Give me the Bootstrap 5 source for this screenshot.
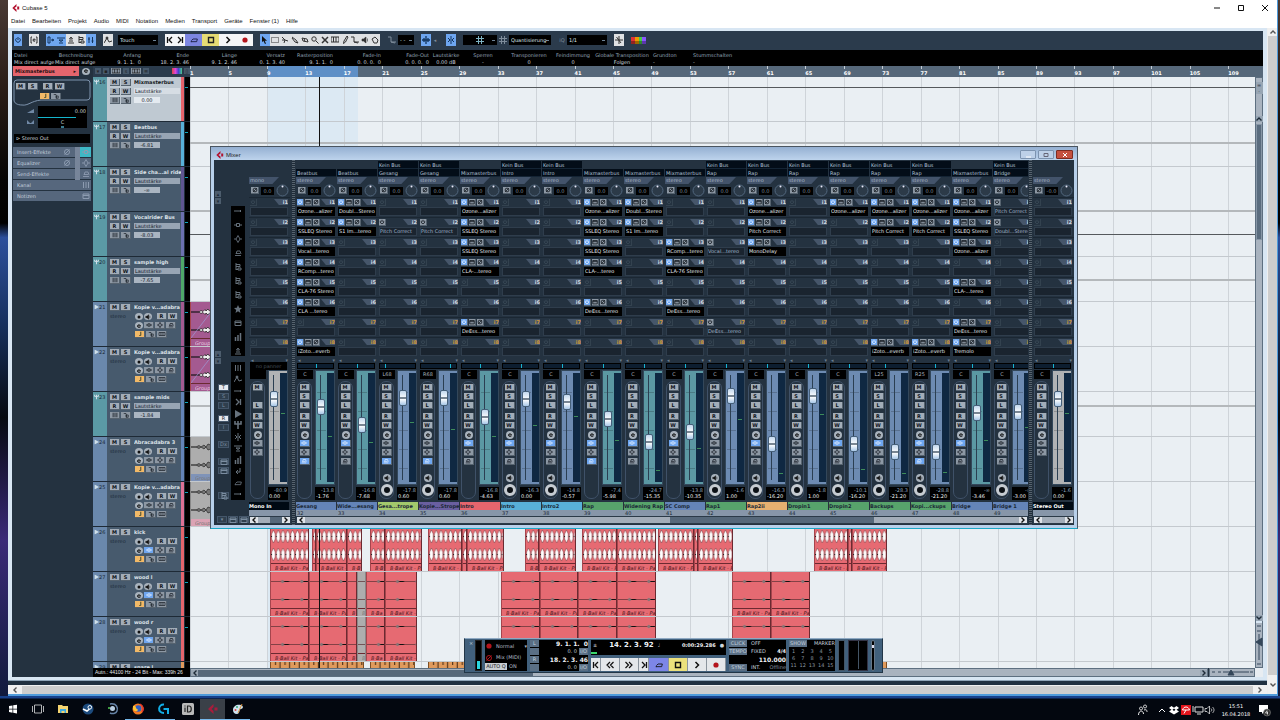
<!DOCTYPE html>
<html lang="de">
<head>
<meta charset="utf-8">
<meta name="viewport" content="width=device-width, initial-scale=1">
<title>Cubase 5</title>
<link href="https://cdn.jsdelivr.net/npm/bootstrap@5.3.0/dist/css/bootstrap.min.css" rel="stylesheet">
<style>
:root{--navy:#243240;--bar:#2b3b4c;--pale:#c5d0dc;--key:#a3adb8;--on:#6ea6f0;--teal:#5b9aa5;--blue:#6a88ac}
*{box-sizing:border-box}
body{height:100vh;margin:0;overflow:hidden;background:linear-gradient(#4a3a34 0,#2a1d18 12%,#050505 25%,#000 31%,#2c4f9c 33%,#16305e 45%,#060a12 58%,#3a2a78 75%,#101a3c 97%);font:5px/7px "DejaVu Sans",sans-serif;color:var(--pale)}
svg{display:block;overflow:visible}
button,select,input{font:inherit;color:inherit;border:0;padding:0;margin:0;border-radius:0}
button{display:flex;align-items:center;justify-content:center;background:none;line-height:7px}
a{color:inherit;text-decoration:none}
.ic{width:8px;height:8px;fill:none;stroke:currentColor;stroke-width:1}
.clip{overflow:hidden;white-space:nowrap}
.win-ui{font:6px/12px "Liberation Sans",sans-serif;color:#111}
.app{margin:0 2px 0 8px;background:#fff;border:solid #4f9bdb;border-width:0 1px 2px 0}
.titlebar{height:15px}
.menu{height:13px;padding-left:3px}
.menu a{margin-right:7px}
.mdi{background:#d8e6f3;padding:3px 4px}
.vscroll{width:10px;background:#cdcdcd;border-left:1px solid #eee}
.hscroll{height:9px;background:#cdcdcd;border-top:1px solid #f0f0f0}
.sb{width:14px;height:8px;background:#f0f0f0;color:#555}
.hedge{height:5px;background:#203040;border-top:1px solid #8fa5b8}
/* toolbar */
.tools{height:20px;background:var(--bar);gap:7px;padding-left:2px}
.tools button{width:10px;height:12px;background:#dfe1e3;color:#333}
.tools .on{background:var(--on);color:#12355e}
.tools .ghost{background:none;color:#7f8d9b}
.tools .slim{width:8px}
.trans button{width:17px;height:12px;background:#f4f5f7;color:#111}
.trans .half{width:10px}
.trans .cyc{background:#7d86e0;color:#15193c}.trans .stp{background:#e6dc74;color:#222}
.pick{background:#000 linear-gradient(#6d8294,#6d8294) no-repeat right 2px center/3px 1px;color:#dfe6ec;height:10px;appearance:none;padding:0 2px;line-height:10px}
/* info line */
.info{height:16px;background:#000;color:#93a4b7;padding:2px 0 0 2px}
.info b{display:block;font-weight:400;color:#ccd5de}
.info>div{height:14px;line-height:7px;white-space:pre}
.info .num{width:48px;text-align:right}
/* column headers */
.w-insp{width:81px;flex:none}.w-list{width:97px;flex:none}.w-vs{width:8px;flex:none}
.head{height:12px}
.name-red{width:66px;height:10px;background:#e5656d;color:#2a1114;font-weight:700;line-height:10px;padding:0 3px 0 2px;margin-left:1px}
.lhead{background:var(--bar);gap:2px;padding-left:2px}
.lhead button{width:10px;height:6px;background:#8996a4;color:#222}
.lhead .dim{background:#46586a;width:6px}
.ruler{background:#56687a;color:#fff;font-weight:700;position:relative}
.ruler .loop{position:absolute;top:0;bottom:0;left:7.3%;width:8.5%;background:#5e8fc6}
.bar4{flex:0 0 3.612%;border-left:1px solid #c3ccd4;height:3px}
.bar4 span{display:block;padding-top:4px;margin-left:-1px;line-height:7px}
/* inspector */
.insp{background:var(--navy);padding:2px 2px 0 1px}
.kb{width:10px;height:7px;background:var(--key);color:#0c1118;font-weight:700;border:1px solid #56636f;border-width:0 1px 1px 0;flex:none}
.kb .ic{width:8px;height:6px;stroke-width:1}
.kb.orange{background:#f2b967;color:#553}
.kb.lit{background:var(--on);color:#eaf3ff}
.kb.soft{background:#8d98a4}
.frame{height:27px;position:relative}
.frame>svg{position:absolute;inset:0}
.blk{background:#000;color:#cfd6dc}
.tab{height:10px;margin-bottom:1px;background:#56677d;color:#c3cedb}
.tab .ic{color:#8c9bb0}
.tab i{width:5px;height:11px;background:#77859a}
.tab .end{width:11px;height:10px;color:#97a5b8;display:flex;align-items:center;justify-content:center}
/* track list */
.trk{height:45px;border-bottom:1px solid #1e2a36;background:#475a6d}
.trk .no{width:14px;background:var(--blue);color:#1b2836;padding:2px 0 0 1px}
.trk.grpx .no{background:var(--teal)}
.trk .no svg{width:5px;height:6px}
.trk .col{padding:2px 0 0 3px;gap:2px;width:74px}
.trk .ln{height:7px;gap:1px}
.trk .nm{font-weight:700;color:#dde3ea;width:47px;margin-left:2px}
.trk.sel{background:#bfc9d2}.trk.sel .nm{color:#15191d}
.trk .par{width:46px;height:6px;line-height:6px;background:#98a5b4;color:#16202b;margin-left:2px;padding-left:1px;appearance:none}
.trk.sel .par{background:#d6dde4}
.trk .val{width:26px;height:6px;line-height:6px;background:#aab5c1;color:#16202b;text-align:center;margin-left:2px}
.trk.sel .val{background:#e4eaf0}
.trk .st{width:24px;color:#1d2a38}
.trk .tint{width:3px;margin-left:auto}
.trk .mt{width:6px;background:#000;border-left:1px solid #22303c;padding-top:10px}
.trk .mt i{display:block;width:3px;height:1px;background:#12a8bd}
.rnd{width:8px;height:7px;border-radius:50%;background:#a9b3bd;color:#111;flex:none}
.rnd .ic{width:6px;height:6px}
/* arrangement canvas */
.canvas{background:#eaeff3;position:relative;overflow:hidden}
.canvas .lane{height:45px;border-bottom:1px solid #c4c9ce;position:relative;z-index:1}
.canvas .grid{position:absolute;inset:0}
.canvas .grid i{flex:0 0 3.612%;border-left:1px solid #cfd4d9}
.canvas .range{position:absolute;top:0;bottom:0;left:7.3%;width:8.5%;background:#dce9f3}
.auto{position:absolute;left:0;right:0;height:2px;background:#b4b8bb}
.auto.dk{height:1px;background:#55595c}
.playhead{position:absolute;top:0;bottom:0;left:12.1%;width:1px;background:#111;z-index:2}
.ev{position:absolute;top:0;height:44px;background:#e66a72;border-right:1px solid #6b2a31;border-left:1px solid #a6454d;overflow:hidden}
.ev svg{position:absolute;left:0;top:0;width:100%;height:44px}
.ev span{position:absolute;left:4px;right:0;bottom:0;height:6px;line-height:6px;font-style:italic;color:#3d1016;white-space:nowrap;overflow:hidden}
.ev u{position:absolute;left:0;right:0;bottom:7px;height:1px;background:#6b2a31}
.ev.pur{background:#a45a90}.ev.pur span{color:#e9c8e0}
.ev.gry{background:#adadad;border-color:#888}.ev.gry span{color:#777}
.ev.gry.blu u,.ev.gry.pnk u{height:7px;bottom:0;background:#7f93b8}.ev.gry.pnk u{background:#dba3b4}
.ev.orr{background:#e09a5c;border-color:#7d4f24}
.csb{background:#a9b3bf;border:1px solid #5d6f80}
.csb button{background:#97a5b3;color:#1d2b38;width:7px;height:6px}
.stat{background:#000;color:#e4e8ec;font-family:"Liberation Sans",sans-serif;line-height:9px;padding-left:2px}
/* mixer */
.mixer{position:absolute;left:210px;top:146px;width:868px;z-index:5;background:#b8d0ea;border:1px solid #4a5560;border-bottom-color:#1aa8c8;padding:0 3px 3px}
.mixer .mt-bar{height:13px;background:linear-gradient(#95b0d2,#bdd3ec);margin:0 -3px;padding:2px 4px 0 5px;font:6px/12px "Liberation Sans",sans-serif;color:#222}
.mt-bar button{width:16px;height:9px;border:1px solid #7c93b0;background:#bdd0e8;color:#fff;border-radius:1px}
.mt-bar .x{background:#c4503f;border-color:#7d2c22;width:17px}
.mx{background:var(--navy);height:365px}
.side{width:35px;flex:none;padding:0 0 0 1px}
.side .tiny{width:6px;height:6px;background:#4d5d6d;color:#1d2a36}
.side .tiny+.tiny{margin-top:1px}
.side .blkcol{width:14px;background:#000;color:#67727d;gap:5px}
.side .vb{width:11px;height:7px;background:#2f3f4e;border:1px solid #44566a;color:#7b8da0}
.side .vb.w{background:#e5eaf0;color:#222}
.divd{width:3px;flex:none;margin:0 1px;background:repeating-linear-gradient(#56636f 0 1px,#202c38 1px 2px)}
.ch{width:41px;flex:none}
.ch .bus{height:8px;line-height:8px;background:#030d18;color:#b4c3d6;padding-left:1px;margin-right:1px;border-bottom:1px solid #142434}
.ch .bus:empty{background:none;border-color:transparent}
.ch .fmt{height:7px;width:30px;line-height:7px;padding-left:1px;background:#43536a;color:#a7b6c7;clip-path:polygon(0 0,100% 0,78% 100%,0 100%)}
.ch .ph{height:13px;padding:0 1px 0 2px}
.ch .ph .kb{width:8px}
.ch .gain{width:13px;height:8px;line-height:8px;background:#000;color:#7c8b9b;text-align:center}
.ch .ins{height:20px;padding:1px 2px 0 1px;border-top:1px solid #1b2733}
.ch .ih{height:8px}
.ch .ih .kb{width:7px}
.ch .off{background:none;border-color:#33424f;color:#3c4c5a}
.ch .tag{width:14px;height:6px;line-height:6px;margin-left:auto;background:#46566a;color:#d5dde5;text-align:right;font-weight:700;clip-path:polygon(0 0,100% 0,100% 100%,35% 100%)}
.ch .tag.p{color:#d39b3a}
.ch .slot{width:100%;height:9px;line-height:9px;justify-content:flex-start;background:#1a242f;border:1px solid #2f3d4c}
.ch .slot.full{background:#000;border-color:#000;color:#e2e7ec}
.ch .slot.byp{color:#a3b6cd}
.ch .arw{height:6px;color:#6e8092;padding:0 2px}
.ch .pan{height:6px;margin:0 3px 0 1px;background:#0d1e30;border:1px solid #000;position:relative}
.ch .pan i{position:absolute;top:0;bottom:0;width:1px;background:#18b4d0}
.ch .nopan{height:8px;margin:-1px 3px -1px 1px;line-height:8px;background:#000;color:#444f5a;text-align:center}
.ch .low{height:131px;padding:1px 2px 0 1px}
.ch .pt{width:16px;height:9px;line-height:9px;background:#000;color:#a9b4bf;text-align:center}
.ch .caps{width:15px;height:118px;margin-top:2px;border:1px solid #3f5168;border-radius:7px;padding-top:2px;position:relative}
.ch .caps .kb{height:7px;margin-bottom:2px}
.ch .caps .gap{margin-bottom:4px}
.ch .caps .rnd{width:8px;height:8px;margin-bottom:1px}
.ch .caps .none{visibility:hidden}
.ch .caps .foot{position:absolute;bottom:2px}
.ch .caps .foot .rnd{margin-bottom:2px}
.ch .caps .recb{width:12px;height:12px;border-radius:50%;background:#0c1116;border:3px solid #c6ccd2}
.ch .strip{width:20px;height:115px;margin-left:2px;position:relative;border:1px solid #33475a;background:repeating-linear-gradient(#0000 0 18px,#00000030 18px 19px) 1px 3px/9px 100px no-repeat,var(--c)}
.ch .strip .mtr{position:absolute;left:11px;top:2px;bottom:2px;width:7px;background:#0f2842}
.ch .strip .mtr i{position:absolute;left:1px;width:4px;height:1px;background:#3d8c5a}
.ch .strip .rail{position:absolute;left:4px;top:4px;bottom:4px;width:1px;background:#2b3f52}
.ch input[type=range]{position:absolute;left:-52px;top:51px;width:114px;height:12px;transform:rotate(-90deg);appearance:none;-webkit-appearance:none;background:none}
.ch input[type=range]::-webkit-slider-thumb{-webkit-appearance:none;width:16px;height:8px;border-radius:2px;border:1px solid #46607a;background:linear-gradient(90deg,#a9c8e8,#fff 45%,#456 47%,#456 53%,#f4f8fc 55%,#c3d8ee)}
.ch .lv{width:20px;height:13px;margin:2px 0 0 2px;background:#000;color:#8fa4bf;line-height:6px;text-align:right;padding:0 1px}
.ch .lv b{display:block;font-weight:400;color:#eef1f4;text-align:left}
.ch .cn{height:8px;line-height:8px;background:var(--n);color:#1b2836;font-weight:700;border-right:1px solid #26323f}
.ch .num{height:6px;line-height:6px;background:#8796a9;color:#1b2836;padding-left:1px}
.io .cn{color:#fff}
.msb{height:8px;background:#a3adb9;color:#111;border:1px solid #2b3a48}
.msb button{width:8px;height:6px;background:#dfe3e8}
/* transport panel */
.tp{position:absolute;left:464px;top:638px;width:419px;height:35px;z-index:6;background:#41607c;border:1px solid #223647;border-top-color:#8fa9c2;padding:1px 4px;gap:3px}
.tp>*{flex:none}
.tp .box{background:#000;height:31px}
.tp .lab{background:#5a6f85;color:#c3cfdb;height:7px;text-align:center;flex:none}
.tp .lab.w{width:18px}
.tp .row7{height:8px;line-height:7px}
.tp .tbtn button{height:13px;background:#e4e7ea;color:#111;border-right:1px solid #8b949d;flex:2 0 0}
.tp .tbtn .half{flex:1 0 0}
.tp .tbtn .cyc{background:#7d86e8}.tp .tbtn .stp{background:#ece17c}
.big{font-weight:700;color:#f0f3f6;white-space:pre}
.f6{font-size:6px}.f7{font-size:7px}
/* taskbar */
.task{height:24px;padding-top:3px;background:linear-gradient(#17408a 0 2px,#03070f 3px)}
.task .app-b{width:25px;height:21px;border-bottom:1px solid transparent}
.task .run{border-color:#76b9ed;padding:0}
.task .act{background:#3a4048}
.task svg{width:12px;height:12px}
.clock{text-align:center;color:#fff;line-height:8px;width:34px;margin-left:3px}
</style>
</head>
<body class="d-flex flex-column">
<svg width="0" height="0" class="position-absolute" aria-hidden="true">
<defs>
<symbol id="cub" viewBox="0 0 8 8"><path d="M4.500 0v2.500L2.500 4l2 1.500V8L.3 4z" fill="#b3122f" stroke="none"/><path d="M5.200 2.500h2v3h-2z" fill="#b3122f" stroke="none"/></symbol>
<symbol id="pow" viewBox="0 0 8 8"><path d="M4 1v3M2.500 2.200a2.300 2.300 0 1 0 3 0"/></symbol>
<symbol id="ed" viewBox="0 0 8 8"><path d="M2 1H1v6h1M6 1h1v6H6M3 4h2.300C5 2.500 3 2.500 3 4s1.500 1.700 2.200 1"/></symbol>
<symbol id="t1" viewBox="0 0 8 8"><path d="M1 1v6h2V1zM5 3v2l2-1z"/></symbol>
<symbol id="t2" viewBox="0 0 8 8"><path d="M0 2h8M2 4h4L4 5.500zM2 7h4"/></symbol>
<symbol id="t3" viewBox="0 0 8 8"><path d="M4 1l1.500 2h-3zM2 5h4M1 7h6"/></symbol>
<symbol id="t4" viewBox="0 0 8 8"><path d="M2 0v7M2 1.500h4v2H2M2 6.500h2M4 5h3v2H4z"/></symbol>
<symbol id="t5" viewBox="0 0 8 8"><path d="M2 1v6M5.500 1v6M1 3h2M4.500 5h2"/></symbol>
<symbol id="auto" viewBox="0 0 8 8"><path d="M0 7l3-5 2 4 3-1"/><circle cx="3" cy="2" r="1" fill="currentColor"/></symbol>
<symbol id="prev" viewBox="0 0 8 8"><path d="M1.500 1v6M6 1L3 4l3 3" stroke-width="1.300"/></symbol>
<symbol id="next" viewBox="0 0 8 8"><path d="M6.500 1v6M2 1l3 3-3 3" stroke-width="1.300"/></symbol>
<symbol id="cyc" viewBox="0 0 12 8"><path d="M2 6.500h8l1-4H4.500L2 5M1 6.500h2" stroke-width="1.300"/></symbol>
<symbol id="stp" viewBox="0 0 8 8"><path d="M1.500 1.500h5v5h-5z" stroke-width="1.400"/></symbol>
<symbol id="ply" viewBox="0 0 8 8"><path d="M2.500 1l3 3-3 3" stroke-width="1.500"/></symbol>
<symbol id="rew" viewBox="0 0 8 8"><path d="M4 1L1 4l3 3M7.500 1l-3 3 3 3" stroke-width="1.200"/></symbol>
<symbol id="ffw" viewBox="0 0 8 8"><path d="M.5 1l3 3-3 3M4 1l3 3-3 3" stroke-width="1.200"/></symbol>
<symbol id="rec" viewBox="0 0 8 8"><circle cx="4" cy="4" r="2.600" fill="#b3141c" stroke="none"/></symbol>
<symbol id="dot" viewBox="0 0 8 8"><circle cx="4" cy="4" r="2" fill="#111" stroke="none"/></symbol>
<symbol id="arr" viewBox="0 0 8 8"><path d="M1 0v6l1.500-1 1.500 3 1-.6-1.300-2.600H6z" fill="#111" stroke="none"/></symbol>
<symbol id="rng" viewBox="0 0 8 8"><path d="M.5 1.500h7v5h-7z" stroke-dasharray="1 1"/></symbol>
<symbol id="cut" viewBox="0 0 8 8"><path d="M1 1l3 3 3 1M4 4l-1 3M1 4h3"/></symbol>
<symbol id="glu" viewBox="0 0 8 8"><path d="M1 1l4 3 2 3-3-1-3-4"/></symbol>
<symbol id="era" viewBox="0 0 8 8"><path d="M1 2l5 1 1 3-5-1zM3 2.500l1 3"/></symbol>
<symbol id="mag" viewBox="0 0 8 8"><circle cx="3" cy="3" r="2.200"/><path d="M5 5l2.500 2.500"/></symbol>
<symbol id="mut" viewBox="0 0 8 8"><path d="M1 1l6 6M7 1L1 7" stroke-width="1.500"/></symbol>
<symbol id="tim" viewBox="0 0 8 8"><path d="M0 1h8v5H0zM2.500 1v5M5 1v5"/></symbol>
<symbol id="pen" viewBox="0 0 8 8"><path d="M6 0L3 5 2.500 7.500 4.500 6 7 1z"/></symbol>
<symbol id="lin" viewBox="0 0 8 8"><path d="M0 1h3v5h5M3 6l4 1"/></symbol>
<symbol id="spk" viewBox="0 0 8 8"><path d="M1 3h1.500L5 1v6L2.500 5H1zM6.500 2.500v3" fill="currentColor" stroke-width=".6"/></symbol>
<symbol id="hand" viewBox="0 0 8 8"><path d="M1 3l3-2 3 3-1 3H3z"/></symbol>
<symbol id="hash" viewBox="0 0 8 8"><path d="M2.500 0v8M5.500 0v8M0 2.500h8M0 5.500h8"/></symbol>
<symbol id="snap" viewBox="0 0 8 8"><path d="M4 0v8M1 2l2 2-2 2M7 2L5 4l2 2"/></symbol>
<symbol id="scr" viewBox="0 0 8 8"><path d="M4 0v8M0 4h8M2 2v4M6 2v4" stroke-width="1.300"/></symbol>
<symbol id="zer" viewBox="0 0 8 8"><path d="M4 0v8M0 4h8M1.500 1L6 7"/></symbol>
<symbol id="tri" viewBox="0 0 8 8"><path d="M1 0l7 4-7 4z" fill="currentColor" stroke="none"/></symbol>
<symbol id="fork" viewBox="0 0 8 8"><path d="M1 0v3h6V0M4 0v8" stroke="currentColor" stroke-width="1.600" fill="none"/></symbol>
<symbol id="note" viewBox="0 0 8 8"><path d="M5 1v5M3 6h2" stroke-width="1.500"/></symbol>
<symbol id="lane" viewBox="0 0 8 8"><path d="M1 2h3l1 5M4 4h3v3H4z" stroke-width=".8"/></symbol>
<symbol id="keys" viewBox="0 0 8 8"><path d="M0 2h8v4H0zM2.600 2v4M5.300 2v4" stroke-width=".8"/></symbol>
<symbol id="lns" viewBox="0 0 8 8"><path d="M1.500 1v6M4 1v6M6.500 1v6"/></symbol>
<symbol id="insx" viewBox="0 0 8 8"><path d="M0 4h2M6 4h2M2.500 2.500h3v3h-3z"/></symbol>
<symbol id="eqx" viewBox="0 0 8 8"><path d="M0 4h2M6 4h2M4 .5L6 4 4 7.500 2 4z" stroke-width=".9"/></symbol>
<symbol id="sndx" viewBox="0 0 8 8"><path d="M1 6.500h6M2 5l1-3h3l1 3M2 4.500h4" stroke-width=".9"/></symbol>
<symbol id="ee" viewBox="0 0 8 8"><path d="M2 4h4C5.500 1.500 2 2 2 4.200S5 6.500 6 5.300" stroke-width="1.200"/></symbol>
<symbol id="box" viewBox="0 0 8 8"><path d="M1 2h6v4.500H1zM1 3.500h6"/></symbol>
<symbol id="phs" viewBox="0 0 8 8"><circle cx="4" cy="4" r="2.500"/><path d="M1.500 6.500l5-5"/></symbol>
<symbol id="cl" viewBox="0 0 8 8"><path d="M5.500 1.500L3 4l2.500 2.500" stroke-width="1.400"/></symbol>
<symbol id="cr" viewBox="0 0 8 8"><path d="M2.500 1.500L5 4 2.500 6.500" stroke-width="1.400"/></symbol>
<symbol id="cd" viewBox="0 0 8 8"><path d="M1.500 2.500L4 5l2.500-2.500" stroke-width="1.400"/></symbol>
<symbol id="cu" viewBox="0 0 8 8"><path d="M1.500 5.500L4 3l2.500 2.500" stroke-width="1.400"/></symbol>
<symbol id="star" viewBox="0 0 8 8"><path d="M4 0l1.200 2.800L8 3 5.800 5l.7 3L4 6.300 1.500 8l.7-3L0 3l2.800-.2z" fill="currentColor" stroke="none"/></symbol>
<symbol id="bars" viewBox="0 0 8 8"><path d="M1.500 4v4M4 2v6M6.500 0v8" stroke-width="1.500"/></symbol>
<symbol id="ret" viewBox="0 0 8 8"><path d="M6 1v4H2M4 3L2 5l2 2"/></symbol>
<symbol id="dots" viewBox="0 0 8 8"><path d="M0 4h2M3 3v2M5 3v2M6.500 3v2"/></symbol>
<pattern id="kickwave" width="4.800" height="44" patternUnits="userSpaceOnUse"><path d="M2.400 3L4.200 7v5L2.400 16 .6 12V7zM2.400 21L4.200 25v5l-1.800 4-1.800-4v-5z" fill="#fff" stroke="#6d3238" stroke-width=".5"/><path d="M0 9.500h1M0 27.500h1" stroke="#222"/></pattern>
<pattern id="woodwave" x="2" width="19.300" height="44" patternUnits="userSpaceOnUse"><path d="M0 9.500h19.300M0 27.500h19.300" stroke="#5b3034" stroke-width=".7"/><path d="M9 9.500h7M9 27.500h7" stroke="#111" stroke-width="1.200"/><ellipse cx="9.500" cy="9.500" rx="1.500" ry="1.800" fill="#8b7476"/><ellipse cx="9.500" cy="27.500" rx="1.500" ry="1.800" fill="#8b7476"/></pattern>
<pattern id="voxwave" width="22" height="44" patternUnits="userSpaceOnUse"><path d="M0 10h8l2-1.500 2 1 2-2 1 1.500 2-2 1.500 2 3.500-2v6l-3.500-2-1.500 2-2-2-1 1.500-2-2-2 1-2-1.500H0M0 28h8l2-1.500 2 1 2-2 1 1.500 2-2 1.500 2 3.500-2v6l-3.500-2-1.500 2-2-2-1 1.500-2-2-2 1-2-1.500H0" fill="#eee" stroke="#111" stroke-width=".7"/><path d="M0 36L20 10" stroke="#9aa4e0" stroke-width=".6"/></pattern>
<pattern id="graywave" width="22" height="44" patternUnits="userSpaceOnUse"><path d="M0 10h5l3-1.500 2 1.500 3-2 2 2 2-3 5 2v2l-5 2-2-3-2 2-3-2-2 1.500L5 10zM0 28h5l3-1.500 2 1.500 3-2 2 2 2-3 5 2v2l-5 2-2-3-2 2-3-2-2 1.500L5 28z" fill="#777" stroke="#222" stroke-width=".7"/></pattern>
<pattern id="snare" width="9.600" height="44" patternUnits="userSpaceOnUse"><path d="M9 0v44M4.500 0v3" stroke="#3d2410"/></pattern>
</defs>
</svg>

<div class="app flex-grow-1 d-flex flex-column position-relative" style="min-height:0">
  <header class="win-ui">
    <div class="titlebar d-flex align-items-center">
      <svg class="ic ms-1" style="margin-right:2px"><use href="#cub"/></svg><span>Cubase 5</span>
      <div class="ms-auto d-flex" style="gap:16px">
        <button aria-label="Minimieren"><svg class="ic"><path d="M1 4h6"/></svg></button>
        <button aria-label="Maximieren"><svg class="ic"><path d="M1.500 1.500h5v5h-5z"/></svg></button>
        <button aria-label="Schließen" class="me-2"><svg class="ic"><path d="M1 1l6 6M7 1L1 7"/></svg></button>
      </div>
    </div>
    <nav class="menu d-flex" id="menu"></nav>
  </header>
  <div class="d-flex flex-grow-1" style="min-height:0">
    <div class="d-flex flex-column flex-grow-1" style="min-width:0">
      <main class="mdi d-flex flex-column flex-grow-1" style="min-height:0">
        <div class="tools d-flex align-items-center" id="tools"></div>
        <div class="info d-flex" id="info"></div>
        <div class="d-flex head">
          <div class="w-insp d-flex align-items-center" style="background:#243240">
            <div class="name-red d-flex justify-content-between"><span>Mixmasterbus</span><span>▸</span></div>
            <button class="rnd" style="margin-left:3px" aria-label="Bearbeiten"><svg class="ic"><use href="#ee"/></svg></button>
          </div>
          <div class="w-list lhead d-flex align-items-center">
            <button class="dim">▾</button><button class="dim">▪</button><button><svg class="ic"><use href="#keys"/></svg></button><button class="dim">s</button><button><svg class="ic"><use href="#keys"/></svg></button><button class="dim">≡</button>
            <button class="ms-auto" style="background:linear-gradient(90deg,#d44,#d4d 35%,#44c 65%,#4c8)" aria-label="Farben"></button><button class="dim">▯</button>
          </div>
          <div class="ruler flex-grow-1 clip"><div class="loop"></div><div class="d-flex position-relative" id="ruler"></div></div>
          <div class="w-vs" style="background:#56687a"></div>
        </div>
        <div class="d-flex flex-grow-1" style="min-height:0;overflow:hidden">
          <aside class="insp w-insp" id="insp">
            <div class="frame">
              <svg viewBox="0 0 78 27" fill="none" stroke="#7d93ad"><path d="M1 21V4a3 3 0 0 1 3-3h70a3 3 0 0 1 3 3v14a3 3 0 0 1-3 3H28C18 22 15 27 9 26 4 26 1 24 1 21z"/></svg>
              <div class="position-relative d-flex" style="gap:2px;padding:4px 0 0 3px"><button class="kb">M</button><button class="kb">S</button><button class="kb" style="margin-left:3px">R</button><button class="kb">W</button></div>
              <div class="position-relative d-flex" style="gap:1px;padding:3px 0 0 27px"><button class="kb orange"><svg class="ic"><use href="#note"/></svg></button><button class="kb soft"><svg class="ic"><use href="#lane"/></svg></button></div>
            </div>
            <div class="d-flex">
              <div class="d-flex flex-column align-items-end" style="width:25px;gap:7px;padding:3px 4px 0 0"><svg width="7" height="4"><path d="M0 4L7 0v4z" fill="#7088a5"/></svg><svg width="7" height="4"><path d="M0 0l3 3h1l3-3v4H0z" fill="#7088a5"/></svg></div>
              <div class="blk flex-grow-1 me-1" style="height:22px"><div class="text-end" style="padding:2px 1px 2px 0">0.00</div><div style="height:1px;width:78%;background:#15b5cc"></div><div class="text-center" style="padding-top:1px">C</div><div class="mx-auto" style="width:3px;height:2px;background:#3b7d92"></div></div>
            </div>
            <div class="blk" style="height:9px;line-height:9px;margin:6px 1px 4px 1px;padding-left:2px">⊳ Stereo Out</div>
          </aside>
          <section class="w-list d-flex flex-column overflow-hidden" id="tracks"></section>
          <section class="canvas flex-grow-1" id="canvas"><div class="range"></div><div class="grid d-flex" id="grid"></div><div class="playhead"></div></section>
          <div class="w-vs d-flex flex-column csb align-items-center">
            <button class="mt-1">=</button><button>·</button><div style="height:22px"></div><button aria-label="Hoch"><svg class="ic"><use href="#cu"/></svg></button>
            <div class="w-100" style="height:116px;background:#5a6c7e;margin-top:2px;border:1px solid #8796a6"></div>
            <button class="mt-auto" aria-label="Runter"><svg class="ic"><use href="#cd"/></svg></button>
            <div class="w-100" style="border-top:2px solid #d8e6f3;height:46px"><svg width="6" height="44" stroke="#34475a"><path d="M1 3h4M1 8h4M3 11v26M1 41h4"/><path d="M0 19l6-4v8z" fill="#34475a"/></svg></div>
          </div>
        </div>
        <div class="d-flex" style="background:#243240;height:9px">
          <div class="w-insp"></div>
          <div class="w-list stat clip">Autn.: 44100 Hz - 24 Bit - Max: 339h 26</div>
          <div class="csb d-flex flex-grow-1 align-items-center"><button aria-label="Links"><svg class="ic"><use href="#cl"/></svg></button><div style="width:33%;height:6px;background:#56687a"></div><button class="ms-auto" aria-label="Rechts"><svg class="ic"><use href="#cr"/></svg></button></div>
          <div class="csb d-flex" style="width:46px;margin-left:1px"><svg width="44" height="6" stroke="#34475a"><path d="M2 3h3M8 3h3M13 3h26M40 3h3"/><path d="M18 6l3-5 3 5z" fill="#34475a"/></svg></div>
          <div class="w-vs" style="background:#e8edf2"></div>
        </div>
      </main>
      <div class="hedge"></div>
      <div class="hscroll d-flex"><button class="sb" aria-label="Links"><svg class="ic"><use href="#cl"/></svg></button><button class="sb ms-auto" aria-label="Rechts"><svg class="ic"><use href="#cr"/></svg></button></div>
    </div>
    <div class="vscroll d-flex flex-column justify-content-between"><button class="w-100 sb" aria-label="Hoch"><svg class="ic"><use href="#cu"/></svg></button><button class="w-100 sb" style="height:19px" aria-label="Runter"><svg class="ic"><use href="#cd"/></svg></button></div>
  </div>
</div>

<section class="mixer" aria-label="Mixer">
  <div class="mt-bar d-flex align-items-center"><svg class="ic"><use href="#cub"/></svg><span style="margin-left:2px">Mixer</span>
    <div class="ms-auto d-flex" style="gap:2px"><button aria-label="Minimieren"><svg class="ic"><path d="M2 6h5"/></svg></button><button aria-label="Maximieren"><svg class="ic" style="stroke:#667"><path d="M2 2.500h4v3H2z"/></svg></button><button class="x" aria-label="Schließen"><svg class="ic"><path d="M2 2l4 4M6 2L2 6"/></svg></button></div></div>
  <div class="mx d-flex">
    <div class="side d-flex flex-column" id="side"></div>
    <div id="gin" class="io"></div>
    <div class="divd"></div>
    <div class="flex-grow-1 clip" id="gmain"></div>
    <div class="divd"></div>
    <div id="gout" class="io"></div>
  </div>
</section>

<section class="tp d-flex align-items-center" aria-label="Transport">
  <span class="align-self-start" style="width:3px">×</span>
  <div class="box d-flex align-items-end" style="width:7px;border:1px solid #222"><div style="width:3px;height:8px;background:#29d6e0;margin:0 0 1px 1px"></div></div>
  <div class="box" style="width:42px;color:#b3bdc8">
    <div class="d-flex align-items-center" style="height:12px;gap:3px"><svg class="ic"><use href="#rec"/></svg>Normal<span class="ms-auto">▾</span></div>
    <div class="d-flex align-items-center" style="height:11px;gap:3px"><svg class="ic" style="color:#b3141c"><use href="#phs"/></svg>Mix (MIDI)</div>
    <div class="d-flex"><button style="width:22px;height:7px;background:#c9ced3;color:#111;white-space:nowrap">AUTO Q</button><span style="padding-left:2px">ON</span></div>
  </div>
  <div class="box d-flex" style="width:58px">
    <div class="d-flex flex-column justify-content-between" style="width:9px"><div class="lab">L</div><div class="lab"></div><div class="lab">R</div><div class="lab"></div></div>
    <div class="flex-grow-1 text-end">
      <div class="big f6 row7">9. 1. 1.  0</div><div class="d-flex justify-content-end row7" style="gap:2px">0.  0<span class="lab" style="width:9px">I/O</span></div>
      <div class="big f6 row7">18. 2. 3. 46</div><div class="d-flex justify-content-end row7" style="gap:2px">0.  0<span class="lab" style="width:9px">I/O</span></div>
    </div>
  </div>
  <div style="width:135px">
    <div class="blk d-flex align-items-center" style="height:10px;padding:0 2px"><span>±</span><span class="big f7" style="margin-left:12px">14. 2. 3. 92</span><span class="ms-1">♩</span><span class="big ms-auto">0:00:29.286</span><span class="ms-1">●</span></div>
    <div class="blk" style="height:5px;padding-top:2px"><div style="height:2px;width:6px;background:#3ad66b"></div></div>
    <div class="tbtn d-flex" style="padding-top:3px" id="tbtn"></div>
  </div>
  <div class="box" style="width:57px">
    <div class="d-flex row7"><span class="lab w">CLICK</span><span class="ms-1">OFF</span></div>
    <div class="d-flex row7"><span class="lab w">TEMPO</span><span class="ms-1">FIXED</span><span class="big ms-auto">4/4</span></div>
    <div class="big f6 text-end row7">110.000</div>
    <div class="d-flex row7"><span class="lab w">SYNC</span><span class="ms-1">INT.</span><span class="ms-auto" style="color:#8a93a0">Offline</span></div>
  </div>
  <div class="box" style="width:46px"><div class="d-flex justify-content-between row7"><span class="lab w">SHOW</span><span>MARKER</span></div><div class="d-flex flex-wrap text-center" id="marks" style="color:#8a95a1"></div></div>
  <div class="box" style="width:7px;border:1px solid #456"></div>
  <div class="box" style="width:20px;border:1px solid #334"><div style="width:1px;height:28px;background:#456;margin-left:9px"></div></div>
  <div class="box" style="width:4px;border-radius:2px;border:1px solid #678"><div style="height:3px;background:#dde;margin-top:4px"></div></div>
</section>

<footer class="task d-flex" id="task"></footer>

<script src="https://cdn.jsdelivr.net/npm/bootstrap@5.3.0/dist/js/bootstrap.bundle.min.js"></script>
<script>
const $ = id => document.getElementById(id);
const ic = (n, c='') => `<svg class="ic ${c}"><use href="#${n}"/></svg>`;
const btn = (n, c='', t=n) => `<button class="${c}" aria-label="${t}">${ic(n)}</button>`;

$('menu').innerHTML = ['Datei','Bearbeiten','Projekt','Audio','MIDI','Notation','Medien','Transport','Geräte','Fenster (1)','Hilfe'].map(m => `<a href="#">${m}</a>`).join('');

const pick = (v, w, l) => `<select class="pick" style="width:${w}px" aria-label="${l}"><option>${v}</option></select>`;
$('tools').innerHTML =
  btn('pow','on slim') + btn('ed') +
  `<div class="d-flex">${btn('t1','on')}${btn('t2','on')}${btn('t3')}${btn('t4')}${btn('t5','on')}</div>` +
  `<div class="d-flex align-items-center" style="gap:5px">${btn('auto')}${pick('Touch',40,'Automation')}</div>` +
  `<div class="trans d-flex">${btn('prev','half')}${btn('next','half')}${btn('cyc','cyc')}${btn('stp','stp')}${btn('ply')}${btn('rec')}</div>` +
  `<div class="d-flex">${['arr','rng','cut','glu','era','mag','mut','tim','pen','lin','spk','hand'].map((n,i) => btn(n, i ? '' : 'on')).join('')}</div>` +
  `<div class="d-flex align-items-center" style="gap:1px">${btn('lin','ghost')}${pick('- -',16,'Nudge')}</div>` +
  `<div class="d-flex">${btn('scr','on')}<button class="ghost slim">◂</button></div>` + btn('snap','on') +
  `<div class="d-flex align-items-center" style="gap:1px"><div class="pick d-flex align-items-center justify-content-center" style="width:34px;color:#7fb4c4">${ic('hash')}</div>${btn('hash','ghost')}${pick('Quantisierung',42,'Raster')}</div>` +
  `<div class="d-flex align-items-center" style="gap:1px"><button class="ghost slim">iQ</button>${pick('1/1',40,'Quantisierung')}</div>` + btn('zer') +
  `<button style="width:15px;background:linear-gradient(#0000 50%,#0005 50%),linear-gradient(90deg,#d33 25%,#e90 25% 50%,#4c4 50% 75%,#85f 75%);height:7px" aria-label="Farbe"></button>`;

const info = [['Datei','Mix direct aufge ',41,'start'],['Beschreibung','Mix direct aufge',38,'end'],['Anfang','9. 1. 1.  0'],['Ende','18. 2. 3. 46'],['Länge','9. 1. 2. 46'],['Versatz','0. 1. 3. 40'],['Rasterposition','9. 1. 1.  0'],['Fade-In','0. 0. 0.  0'],['Fade-Out','0. 0. 0.  0'],['Lautstärke','0.00 dB',34,'center'],['Sperren','-',40,'center'],['Transponieren','0',52,'center'],['Feindimmung','0',36,'center'],['Globale Transposition','Folgen',62,'center'],['Grundton','-',40,'start'],['Stummschalten','-',60,'start']];
$('info').innerHTML = info.map(([a,b,w,t]) => w ? `<div style="width:${w}px" class="text-${t}">${a}<b>${b}</b></div>` : `<div class="num">${a}<b>${b}</b></div>`).join('');

for (let i = 0; i < 28; i++) {
  $('ruler').innerHTML += `<div class="bar4"><span>${i*4+1}</span></div>`;
  $('grid').innerHTML += '<i></i>';
}

[['Insert-Effekte','insx',1],['Equalizer','eqx',1],['Send-Effekte','sndx',0],['Kanal','lns',0],['Notizen','box',0]].forEach(([n,i,k],j) =>
  $('insp').insertAdjacentHTML('beforeend', `<div class="tab d-flex align-items-center"><span style="padding-left:4px">${n}</span><span class="ms-auto me-1">${k ? ic('phs') : ''}</span>${j < 3 ? '<i></i>' : ''}<div class="end" ${j ? '' : 'style="background:#3fb8c6;color:#0f4f5a"'}>${ic(i)}</div></div>`));

const tracks = [
 [16,'Mixmasterbus','0.00','#e5656d'],[17,'Beatbus','-6.81','#58b0d8'],[18,'Side cha...al ride','-∞','#5f5590'],[19,'Vocalrider Bus','-8.03','#6c70b0'],[20,'sample high','-7.65','#4fa868'],
 [21,'Kopie v...adabra',0,'#a45a90'],[22,'Kopie v...adabra',0,'#a45a90'],[23,'sample mids','-1.84','#6484b8'],[24,'Abracadabra 3',0,'#6484b8'],[25,'Kopie v...adabra',0,'#dd7296'],
 [26,'kick',0,'#e5656d'],[27,'wood l',0,'#e5656d'],[28,'wood r',0,'#e5656d'],[29,'snare l',0,'#e09a5c']];
const ms = '<button class="kb">M</button><button class="kb">S</button>', rw = '<button class="kb">R</button><button class="kb">W</button>';
$('tracks').innerHTML = tracks.map(([n,t,v,c]) => {
  const lit = n > 25 ? 'lit' : 'soft';
  const body = v ?
   `<div class="ln d-flex">${rw}<select class="par" aria-label="Parameter"><option>Lautstärke</option></select></div>
    <div class="ln d-flex">${btn('lns','kb soft')}${btn('lane','kb soft')}<div class="val">${v}</div></div>` :
   `<div class="ln d-flex"><span class="st">stereo</span>${btn('dot','rnd')}${btn('spk','rnd')}<span style="width:3px"></span>${rw}</div>
    <div class="ln d-flex"><span class="st"></span>${btn('ee','rnd')}${btn('insx','kb '+lit)}${btn('eqx','kb soft')}${btn('sndx','kb soft')}</div>
    <div class="ln d-flex"><span class="st"></span>${btn('note','kb orange')}${btn('lane','kb soft')}${btn('keys','kb soft')}</div>`;
  return `<div class="trk d-flex flex-shrink-0 ${v ? 'grpx' : ''} ${n == 16 ? 'sel' : ''}"><div class="no d-flex"><svg viewBox="0 0 8 8" style="color:#cfdfe8"><use href="#${v ? 'fork' : 'tri'}"/></svg>${n}</div>
   <div class="col d-flex flex-column flex-grow-0"><div class="ln d-flex">${ms}<span class="nm clip">${t}</span></div>${body}</div><div class="tint" style="background:${c}"></div><div class="mt"><i></i></div></div>`;
}).join('');

/* arrangement: positions are shares of the visible timeline (1065 units wide) */
const W = 1065, L = '8-Ball Kit - Pa';
const ev = (a, b, wave, label, cls='') => `<div class="ev ${cls}" style="left:${(a/W*100).toFixed(2)}%;width:${((b-a)/W*100).toFixed(2)}%"><svg><rect width="100%" height="100%" fill="url(#${wave})"/></svg><u></u><span>${label}</span></div>`;
const kick = [[80,119,L],[122,126,''],[126,157,'8-Ball Kit -'],[157,172,'8-B'],[180,195,'8-B'],[195,232,L],[238,272,L],[272,277,''],[277,314,L],[335,349,'8-B'],[349,386,L],[392,427,L],[427,466,L],[468,504,L],[504,508,''],[508,543,L],[624,658,L],[658,662,''],[662,697,L]].map(e => ev(e[0],e[1],'kickwave',e[2])).join('');
const wood = [[80,119],[119,157],[157,167,'','8-'],[167,176,'gry','8'],[176,195,'','8-Ba'],[195,227],[311,350],[350,388],[388,427],[427,466],[542,581],[581,620]].map(e => ev(e[0],e[1],'woodwave',e[3]||L,e[2]||'')).join('');
const lanes = {16:'<div class="auto dk" style="top:10px"></div>',17:'<div class="auto" style="top:20px"></div>',18:'<div class="auto" style="top:43px"></div>',19:'<div class="auto dk" style="top:22px"></div>',20:'<div class="auto" style="top:22px"></div>',
 21:ev(0,30,'voxwave','Group','pur'),22:ev(0,30,'voxwave','Group','pur'),23:'<div class="auto" style="top:13px"></div>',24:ev(0,30,'graywave','Group','gry blu'),25:ev(0,30,'graywave','Group','gry pnk'),26:kick,27:wood,28:wood,
 29:[[80,174],[180,225],[238,290],[692,697]].map(e => ev(e[0],e[1],'snare','','orr')).join('')};
$('canvas').insertAdjacentHTML('beforeend', tracks.map(t => `<div class="lane">${lanes[t[0]]||''}</div>`).join(''));

/* mixer channels */
const O='Ozone...alizer', S='SSLEQ Stereo', D='Doubl...Stereo', I='S1 Im...tereo', P='Pitch Correct', C='CLA-...tereo', E='DeEss...tereo', Z='iZoto...everb', K='Kein Bus', M='Mixmasterbus';
const T='#5b98a3', B='#6d8bb2', G='#b0b2b4';
const fadeTop = 372, fadeH = 114, thumb = 16;
/* no, name, name colour, strip, bus1, bus2, pan text, pan position, fader y, peak, level, inserts, kind, lit buttons */
const chs = [
 [32,'Gesang','#6484b8',T,'','Beatbus','C',50,408,'-13.8','-1.76',{1:O,2:S,3:'Vocal...tereo',4:'RComp...tereo',5:'CLA-76 Stereo',6:'CLA ...tereo',8:Z},'g','is'],
 [33,'Wide...esang','#6484b8',T,'','Beatbus','C',50,426,'-16.8','-7.68',{1:D,2:I},'g','i'],
 [34,'Gesa...trope','#a3c96c',B,K,'Gesang','L68',15,399,'-17.8','0.60',{2:'!'+P},'a','s'],
 [35,'Kopie...Strope','#6a5fa0',B,K,'Gesang','R68',84,399,'-17.8','0.60',{2:'!'+P},'a','s'],
 [36,'Intro','#e5656d',T,'',M,'C',50,418,'-16.8','-4.63',{1:O,2:S,3:S,4:C,7:E},'g','i'],
 [37,'Intro','#58b0d8',B,K,'Intro','C',50,400,'-16.3','0.00',{},'a','i'],
 [38,'Intro2','#58b0d8',B,K,'Intro','C',50,403,'-14.8','-0.57',{},'a','i'],
 [39,'Rap','#57a36b',T,'',M,'C',50,420,'-7.4','-5.98',{1:O,2:S,3:S,4:C,6:E},'g','is'],
 [40,'Widening Rap','#57a36b',T,'',M,'C',50,443,'-24.7','-15.35',{1:D,2:I},'g','i'],
 [41,'SC Comp','#6484b8',T,'',M,'C',50,433,'-13.8','-10.35',{3:'RComp...tereo',4:'CLA-76 Stereo',6:E},'g','i'],
 [42,'Rap1','#57a36b',B,K,'Rap','C',50,397,'-1.6','1.00',{3:'!Vocal...tereo',7:'!'+E},'a',''],
 [43,'Rap2ii','#e5b070',B,K,'Rap','C',50,445,'-16.3','-16.20',{1:O,2:P,3:'MonoDelay'},'a','i'],
 [44,'Dropin1','#57a36b',B,K,'Rap','C',50,397,'-1.8','1.00',{},'a',''],
 [45,'Dropin2','#57a36b',B,K,'Rap','C',50,445,'-10.1','-16.20',{1:O},'a','i'],
 [46,'Backups','#57a36b',B,K,'Rap','L25',38,453,'-28.3','-21.20',{1:O,2:P,8:Z},'a','i'],
 [47,'Kopi...ckups','#57a36b',B,K,'Rap','R25',62,453,'-28.8','-21.20',{1:O,2:P,8:Z},'a','is'],
 [48,'Bridge','#6484b8',T,'',M,'C',50,414,'-∞','-3.46',{1:O,2:S,3:O,5:C,7:E,8:'Tremolo'},'g','i'],
 [49,'Bridge 1','#6484b8',B,K,'Bridge','C',50,413,'-∞','-3.00',{1:'!'+P,2:'!'+D},'a','']];
function channel([no,name,nc,strip,b1,b2,pt,pp,fy,pk,lv,ins,kind,lit]) {
  let h = `<div class="ch" style="--c:${strip};--n:${nc}"><div style="height:1px"></div><div class="bus clip">${b1}</div><div class="bus clip">${b2}</div><div class="fmt">${kind=='i'?'mono':'stereo'}</div>
  <div class="ph d-flex align-items-center justify-content-between">${btn('phs','kb soft')}<div class="gain">${kind=='o'?'-0.0':'0.0'}</div><svg width="13" height="13" fill="none"><circle cx="6.500" cy="6.500" r="5.500" fill="#2c3a48" stroke="#52677d"/><circle cx="6.500" cy="2.500" r="1" fill="#eef"/></svg></div>`;
  for (let i = 1; i < 9; i++) {
    const raw = ins[i] || '', byp = raw[0] == '!', t = byp ? raw.slice(1) : raw, on = t && !byp;
    h += `<div class="ins"><div class="ih d-flex" style="gap:1px">${btn('pow','kb '+(on?'lit':byp?'soft':'off'))}${on ? btn('box','kb soft')+btn('phs','kb soft') : ''}<span class="tag ${i>6?'p':''}">i${i}</span></div><button class="slot clip ${on?'full':byp?'byp':''}" aria-label="Insert ${i}">${t}</button></div>`;
  }
  const k = (l,c='') => `<button class="kb ${c}">${l}</button>`;
  const val = ((fadeTop+fadeH-thumb/2-fy)/(fadeH-thumb)*100).toFixed(1);
  h += `<div class="arw d-flex justify-content-between"><span>◂</span><span>▾</span></div>${kind=='i'?'<div class="nopan">no panner</div>':`<div class="pan"><i style="left:${pp}%"></i></div>`}
  <div class="low d-flex"><div><div class="pt">${pt}</div><div class="caps d-flex flex-column align-items-center">
  ${k('M')}${k('S',kind=='i'?'none':'')}${k('L','gap')}${k('R')}${k('W')}${btn('ee','rnd')}${btn('insx','kb '+(lit.includes('i')?'lit':'soft'))}${btn('eqx','kb soft')}${'io'.includes(kind)?'':btn('sndx','kb '+(lit.includes('s')?'lit':'soft'))}
  ${kind=='a'?`<div class="foot d-flex flex-column align-items-center">${btn('spk','rnd')}<button class="recb" aria-label="Aufnahme"></button></div>`:''}</div></div>
  <div><div class="strip"><div class="rail"></div><div class="mtr"><i style="top:${Math.min(100, fy-360+(no*7)%19)}px"></i></div><input type="range" aria-label="Pegel ${name}" step="0.1" value="${val}"></div><div class="lv">${pk}<b>${lv}</b></div></div></div>
  <div style="height:2px"></div><div class="cn clip">${name}</div><div class="num">${no||'&nbsp;'}</div></div>`;
  return h;
}
const sb = inner => `<div class="msb d-flex align-items-center">${btn('cl','','Links')}${inner}${btn('cr','ms-auto','Rechts')}</div>`;
$('gin').innerHTML = channel(['','Mono In','#000a14',G,'','','',0,400,'-80.9','0.00',{},'i','']) + sb('<div style="width:12px;height:6px;margin-left:12px;background:#56687a"></div>');
$('gmain').innerHTML = `<div class="d-flex">${chs.map(channel).join('')}</div>` + sb('<div style="width:50%"></div><div style="width:28%;height:6px;background:#56687a"></div>');
$('gout').innerHTML = channel(['','Stereo Out','#000a14',G,'','','C',50,400,'-1.6','0.00',{},'o','']) + sb('');

const tiny = '<button class="tiny">▴</button><button class="tiny">▾</button>';
$('side').innerHTML = `<div class="d-flex"><div style="width:16px"><div style="height:31px"></div>${tiny}<div style="height:147px"></div>${tiny}<div style="height:20px"></div>
 <div class="d-flex flex-column" style="gap:2px;padding-left:3px"><button class="vb w">T</button><button class="vb">S</button><button class="vb">L</button><button class="vb w mt-1">R</button><button class="vb">I</button><button class="vb mt-2">Dx</button><button class="vb mt-2">${ic('box')}</button><button class="vb">${ic('box')}</button><button class="vb mt-3">${ic('t4')}</button></div></div>
 <div><div style="height:46px"></div><div class="blkcol d-flex flex-column align-items-center justify-content-around" style="height:150px">${['dots','insx','eqx','sndx','t4','t4','t4','star','box','bars','t3'].map(n=>ic(n)).join('')}</div><div style="height:6px"></div><div class="blkcol d-flex flex-column align-items-center justify-content-around" style="height:138px;gap:0">${['lns','auto','dots','next','tri','fork','snap','t2','bars','ret','cyc','dots'].map(n=>ic(n)).join('')}</div></div></div>
 <div class="d-flex mt-auto" style="gap:1px;padding:0 0 2px 2px"><button class="vb">▾</button><button class="vb">${ic('box')}</button><button class="vb">${ic('box')}</button></div>`;

$('tbtn').innerHTML = [['prev','half'],['rew'],['ffw'],['next','half'],['cyc','cyc'],['stp','stp'],['ply'],['rec']].map(b => btn(b[0],b[1]||'')).join('');
for (let i = 1; i < 16; i++) $('marks').innerHTML += `<span style="width:20%">${i}</span>`;

const sv = d => `<svg viewBox="0 0 12 12" fill="none">${d}</svg>`;
const apps = [
 ['Start','',sv('<path d="M2 3l3.500-.6v3.300H2zM6.200 2.300L10 1.700v4H6.200zM2 6.400h3.500v3.300L2 9.100zM6.200 6.400H10v4l-3.800-.6z" fill="#fff"/>')],
 ['Taskansicht','',sv('<path d="M2.500 2h7v8h-7zM.5 3v6M11.500 3v6" stroke="#ddd" stroke-width=".8"/>')],
 ['Explorer','',sv('<path d="M1 2h4l1 1h5v7H1z" fill="#f5d471"/><path d="M3 10V6h6v4H7.500V8h-3v2z" fill="#3fa9e0"/>')],
 ['Steam','',sv('<circle cx="6" cy="6" r="5.500" fill="#1c4a7c"/><path d="M1 6l4 2 2.500-2" stroke="#fff" stroke-width="1.500"/><circle cx="7.800" cy="4.300" r="1.800" fill="#1c4a7c" stroke="#fff"/>')],
 ['TeamSpeak','',sv('<path d="M3 1c7-1 8 4 7 7S5 11 3 10" stroke="#6684a8" stroke-width="1.500"/><circle cx="5.500" cy="5.500" r="2.500" fill="#b9cfe4"/><circle cx="2" cy="5" r="1" fill="#5c5"/>')],
 ['Firefox','run',sv('<circle cx="6" cy="6" r="5.500" fill="#f47a20"/><circle cx="6.200" cy="5.500" r="3.200" fill="#2f5fc4"/><path d="M1 3c2-1 3 1 3 2s2 1 2 2-4 2-5-1z" fill="#ffc533"/><path d="M8 1c3 2 4 5 2 8" stroke="#e2322b" stroke-width="1.500"/>')],
 ['Logitech','run',sv('<path d="M7 1.500C1 1 0 10 7 10M6.500 6H11v5" stroke="#12aee6" stroke-width="2"/>')],
 ['iD','',sv('<rect width="12" height="12" rx="1.500" fill="#b9b9b9"/><path d="M3 4.500V9M3 2.500v1M5.500 3v6H7c3 0 3-6 0-6z" stroke="#222" stroke-width="1.200"/>')],
 ['Cubase','run act',sv('<path d="M6.500 1v3L4.500 6l2 2v3L1 6zM7.500 4.500h3v3h-3z" fill="#a81c3c"/>')],
 ['Paint','run',sv('<path d="M1 7c0-4 4-6 8-5 3 1 2 4 0 4s-1 5-4 5-4-2-4-4z" fill="#cfe2ee"/><circle cx="3.500" cy="7" r="1" fill="#d44"/><circle cx="5" cy="4" r="1" fill="#3a7"/><path d="M10 1L6 10" stroke="#d9923a"/>')]];
$('task').innerHTML = apps.map(([n,c,s]) => `<button class="app-b ${c}" aria-label="${n}">${s}</button>`).join('') +
 `<div class="ms-auto d-flex align-items-center">${sv('<path d="M4 6a1.500 1.500 0 1 1 .1 0M1.500 11c0-5 5-5 5-1M8 4a1.500 1.500 0 1 1 .1 0M7 6c3-1 3 1 3 2" stroke="#eee"/>')}<span style="width:7px"></span>${sv('<path d="M3 8l3-3 3 3" stroke="#fff"/>')}${sv('<path d="M3.500 2L6 3.700 8.500 2 11 4 8.500 5.700 11 7.500 6 10.500 1 7.500l2.500-1.800L1 4zM6 4.500L4.500 5.800 6 7l1.500-1.200z" fill="#fff"/>')}${sv('<rect x="1" y="1" width="10" height="10" fill="#e2141c"/><path d="M2.500 6c1-4 6-4 7 0zM6 6l-2 3.500" stroke="#fff"/>')}${sv('<path d="M3 3h8v5H3zM5 10h4M1 2v6" stroke="#ddd"/>')}${sv('<path d="M1 4.500h2L5.500 2v8L3 7.500H1zM7 4.500c1 1 1 2 0 3M8.500 3c2 2 2 4 0 6" stroke="#ddd" stroke-width=".8"/>')}
 <div class="clock">15:51<br>16.04.2018</div><span style="width:5px"></span>${sv('<path d="M1 1h9v7H6l-2 2V8H1z" fill="#fff"/><circle cx="9" cy="8.500" r="3.500" fill="#333" stroke="#999" stroke-width=".5"/><path d="M9 6.500l-1.500 2.500h2.500M9.500 7.500v3" stroke="#fff" stroke-width=".7"/>')}<span style="width:10px"></span></div>`;
</script>
</body>
</html>
